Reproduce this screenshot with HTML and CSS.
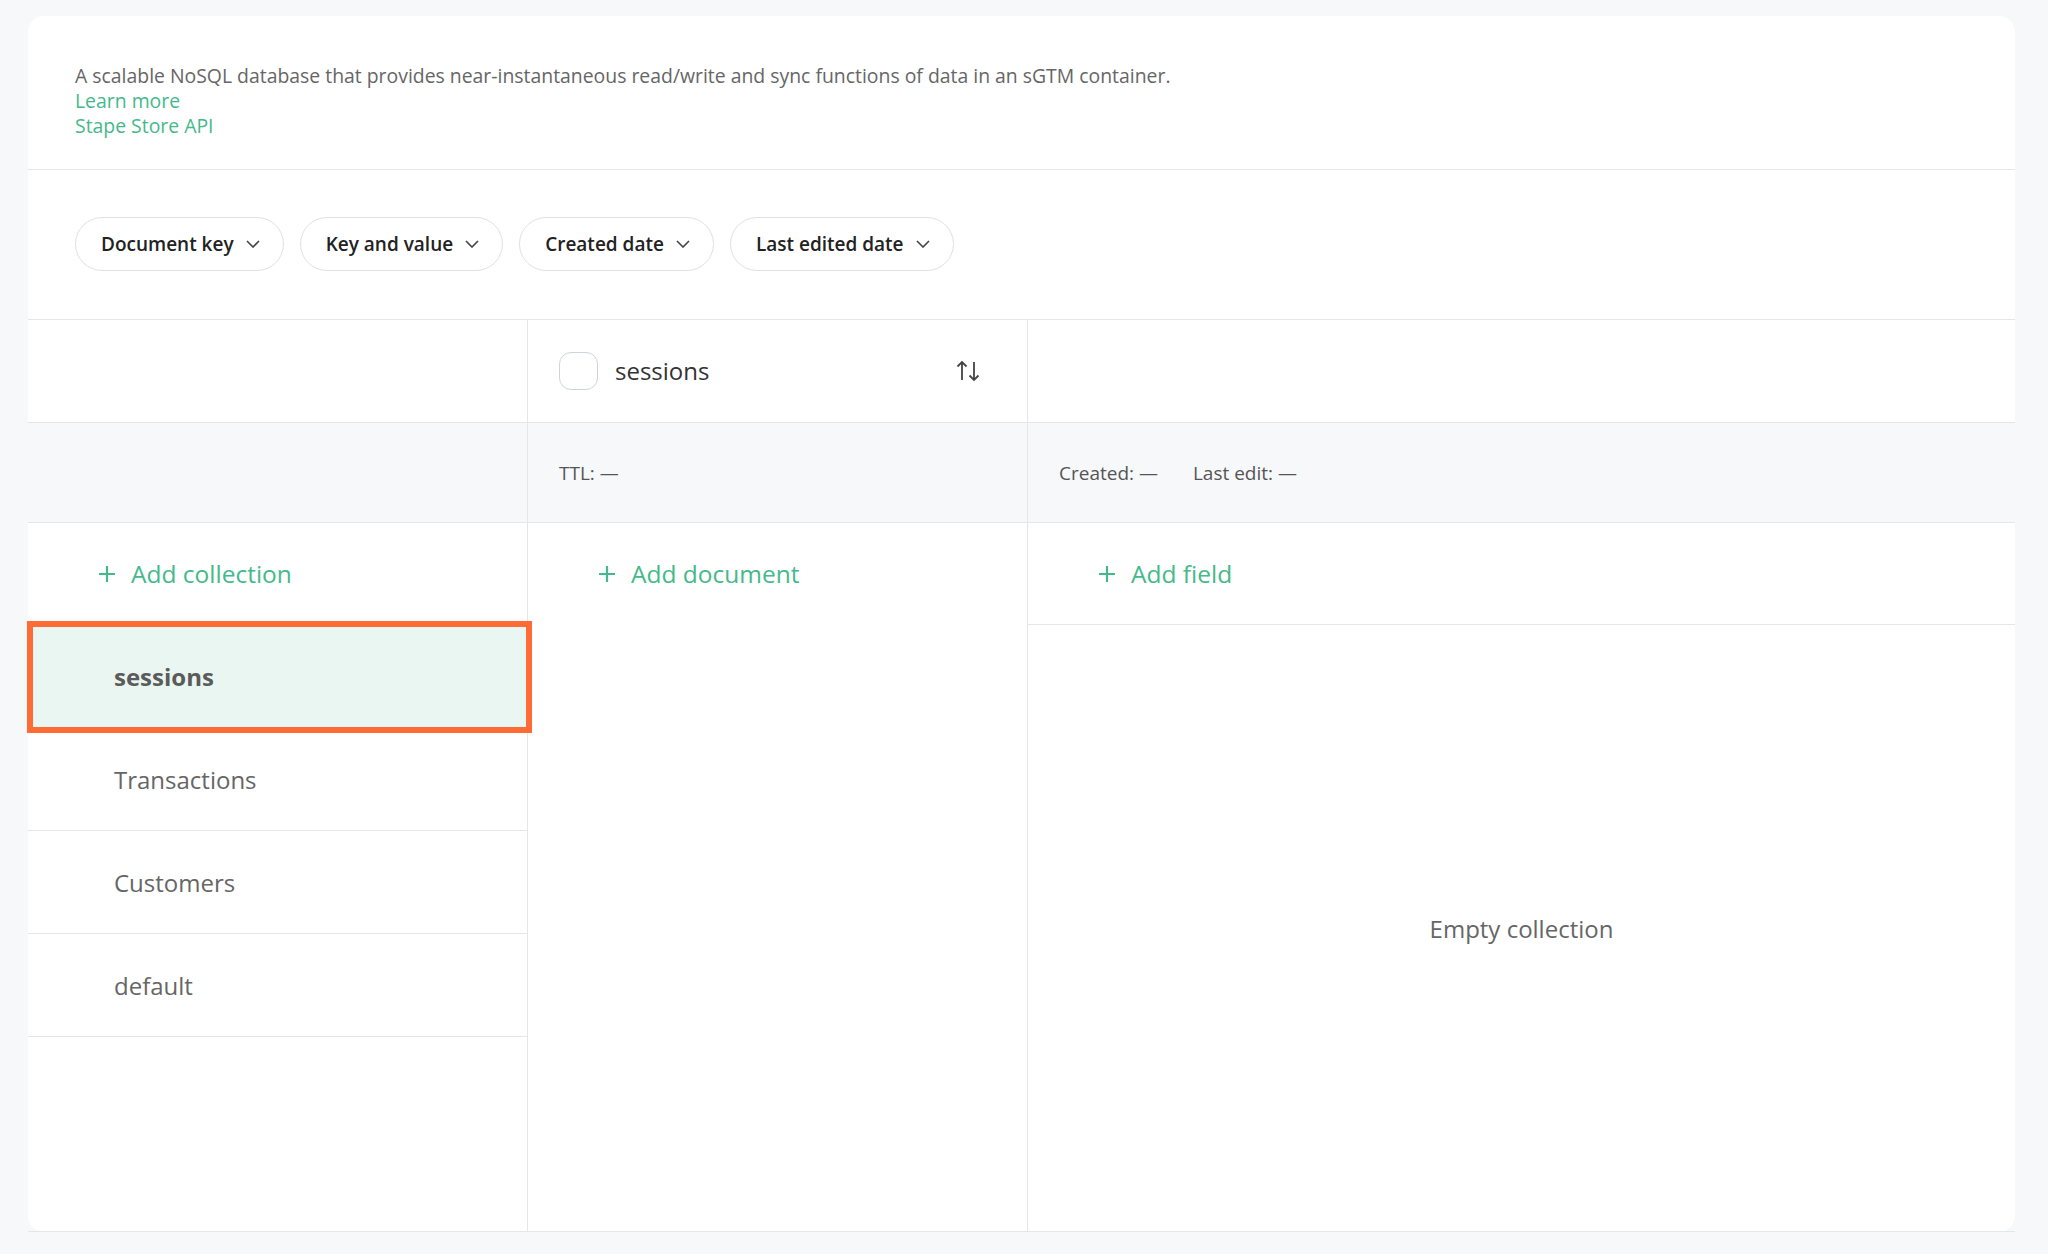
FILE: index.html
```html
<!DOCTYPE html>
<html lang="en">
<head>
    <meta charset="UTF-8">
    <meta name="viewport" content="width=device-width, initial-scale=1.0">
    <title>Stape Store</title>
    <link rel="stylesheet" href="styles.css">
</head>
<body>
    <div class="card">
        <div class="intro">
            <p class="lead">A scalable NoSQL database that provides near-instantaneous read/write and sync functions of data in an sGTM container.</p>
            <a class="link" href="#">Learn more</a>
            <a class="link" href="#">Stape Store API</a>
        </div>

        <div class="filters">
            <button class="filter">Document key
                <svg class="chevron" viewBox="0 0 14 8"><path d="M1 1l6 6 6-6"/></svg>
            </button>
            <button class="filter">Key and value
                <svg class="chevron" viewBox="0 0 14 8"><path d="M1 1l6 6 6-6"/></svg>
            </button>
            <button class="filter">Created date
                <svg class="chevron" viewBox="0 0 14 8"><path d="M1 1l6 6 6-6"/></svg>
            </button>
            <button class="filter">Last edited date
                <svg class="chevron" viewBox="0 0 14 8"><path d="M1 1l6 6 6-6"/></svg>
            </button>
        </div>

        <div class="browser">
            <div class="cell head col-line"></div>
            <div class="cell head col-line doc-head">
                <span class="checkbox"></span>
                <span class="doc-title">sessions</span>
                <svg class="sort" viewBox="0 0 26 24">
                    <path d="M7 21V3M2.5 7.5L7 3l4.5 4.5"/>
                    <path d="M19 3v18M14.5 16.5L19 21l4.5-4.5"/>
                </svg>
            </div>
            <div class="cell head"></div>

            <div class="cell meta col-line"></div>
            <div class="cell meta col-line">TTL: —</div>
            <div class="cell meta"><span>Created: —</span><span>Last edit: —</span></div>

            <div class="col col-line">
                <div class="add-row">
                    <svg class="plus" viewBox="0 0 18 18"><path d="M9 1v16M1 9h16"/></svg>
                    Add collection
                </div>
                <div class="item selected">sessions</div>
                <div class="item">Transactions</div>
                <div class="item">Customers</div>
                <div class="item">default</div>
            </div>
            <div class="col col-line">
                <div class="add-row no-line">
                    <svg class="plus" viewBox="0 0 18 18"><path d="M9 1v16M1 9h16"/></svg>
                    Add document
                </div>
            </div>
            <div class="col">
                <div class="add-row">
                    <svg class="plus" viewBox="0 0 18 18"><path d="M9 1v16M1 9h16"/></svg>
                    Add field
                </div>
                <div class="empty">Empty collection</div>
            </div>
        </div>
    </div>
</body>
</html>
```

FILE: styles.css
```css
body {
    font-family: "Open Sans", "Liberation Sans", sans-serif;
    margin: 0;
    padding: 16px 33px 0 28px;
    background: #f7f8fa;
    color: #666;
}
.card {
    background: white;
    border-radius: 16px;
    height: 1216px;
    display: flex;
    flex-direction: column;
}
.intro {
    padding: 47px 47px 31px;
    border-bottom: 1px solid #e4e6e9;
    font-size: 19.4px;
    line-height: 25px;
}
.lead {
    margin: 0;
}
.link {
    display: block;
    color: #45b98b;
    text-decoration: none;
}
.filters {
    display: flex;
    gap: 16px;
    padding: 47px 47px 48px;
    border-bottom: 1px solid #e4e6e9;
}
.filter {
    display: flex;
    align-items: center;
    gap: 12px;
    height: 54px;
    padding: 0 23px 0 25px;
    border: 1px solid #dfe1e5;
    border-radius: 27px;
    background: white;
    font-family: inherit;
    font-size: 19px;
    font-weight: 600;
    color: #222;
}
.chevron {
    width: 14px;
    height: 8px;
    fill: none;
    stroke: #444;
    stroke-width: 1.6;
}
.browser {
    flex: 1;
    display: grid;
    grid-template-columns: 500px 500px 1fr;
    grid-template-rows: 103px 100px 1fr;
    border-bottom: 1px solid #e4e6e9;
}
.cell {
    display: flex;
    align-items: center;
    border-bottom: 1px solid #e4e6e9;
}
.col-line {
    border-right: 1px solid #e4e6e9;
}
.doc-head {
    padding: 0 46px 0 31px;
}
.checkbox {
    width: 37px;
    height: 36px;
    border: 1px solid #cfd4db;
    border-radius: 12px;
}
.doc-title {
    flex: 1;
    margin-left: 17px;
    margin-bottom: 2px;
    font-size: 24px;
    color: #333;
}
.sort {
    width: 26px;
    height: 24px;
    fill: none;
    stroke: #444;
    stroke-width: 1.8;
}
.meta {
    background: #f7f8fa;
    padding: 0 31px;
    gap: 35px;
    font-size: 19px;
    font-weight: 500;
    color: #555;
}
.col {
    display: flex;
    flex-direction: column;
}
.add-row {
    display: flex;
    align-items: center;
    gap: 15px;
    height: 101px;
    padding-left: 70px;
    border-bottom: 1px solid #e4e6e9;
    font-size: 24.5px;
    font-weight: 500;
    color: #45b98b;
}
.add-row.no-line {
    border-bottom-color: transparent;
}
.plus {
    width: 18px;
    height: 18px;
    fill: none;
    stroke: #45b98b;
    stroke-width: 2.2;
}
.item {
    display: flex;
    align-items: center;
    height: 102px;
    padding-left: 86px;
    border-bottom: 1px solid #e4e6e9;
    font-size: 24px;
    color: #666;
}
.item.selected {
    position: relative;
    background: #eaf6f1;
    font-weight: 700;
    color: #5b5b5b;
}
/* highlight frame drawn over the row edges */
.item.selected::after {
    content: "";
    position: absolute;
    top: -4px;
    right: -5px;
    bottom: -6px;
    left: -1px;
    border: 6px solid #ff6b35;
    z-index: 1;
}
.empty {
    flex: 1;
    display: flex;
    align-items: center;
    justify-content: center;
    font-size: 24px;
    color: #666;
}
```
